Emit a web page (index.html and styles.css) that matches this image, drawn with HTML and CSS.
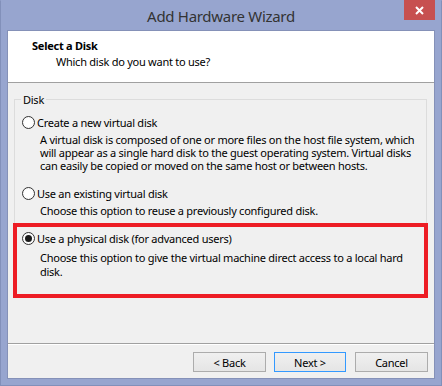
FILE: index.html
```html
<!DOCTYPE html>
<html>
<head>
<meta charset="utf-8">
<link rel="stylesheet" href="styles.css">
</head>
<body>
<div class="window">
  <div class="titlebar">
    <span class="title">Add Hardware Wizard</span>
    <div class="close"><svg width="9" height="9" viewBox="0 0 9 9"><path d="M1 1 L8 8 M8 1 L1 8" stroke="#fff" stroke-width="2" fill="none"/></svg></div>
  </div>
  <div class="client">
    <div class="header">
      <div class="h-title">Select a Disk</div>
      <div class="h-sub">Which disk do you want to use?</div>
    </div>
    <div class="body">
      <div class="group">
        <div class="legend">Disk</div>
        <div class="option o1">
          <div class="row"><span class="radio"></span><span>Create a new virtual disk</span></div>
          <p class="desc">A virtual disk is composed of one or more files on the host file system, which<br>will appear as a single hard disk to the guest operating system. Virtual disks<br>can easily be copied or moved on the same host or between hosts.</p>
        </div>
        <div class="option o2">
          <div class="row"><span class="radio"></span><span>Use an existing virtual disk</span></div>
          <p class="desc">Choose this option to reuse a previously configured disk.</p>
        </div>
        <div class="option o3">
          <div class="row"><span class="radio checked"></span><span>Use a physical disk (for advanced users)</span></div>
          <p class="desc">Choose this option to give the virtual machine direct access to a local hard<br>disk.</p>
          <div class="highlight"></div>
        </div>
      </div>
    </div>
    <div class="footer">
      <button class="btn back">&lt; Back</button>
      <button class="btn next">Next &gt;</button>
      <button class="btn cancel">Cancel</button>
    </div>
  </div>
</div>
</body>
</html>
```
FILE: styles.css
```css
* { box-sizing: border-box; }
html, body { margin: 0; padding: 0; }
body {
  width: 442px;
  height: 386px;
  overflow: hidden;
  font-family: "Noto Sans", "Open Sans", sans-serif;
  font-size: 11px;
  letter-spacing: -0.25px;
  color: #000;
}
.window {
  width: 442px;
  height: 386px;
  background: #97a5cf;
  border: 1px solid #8290ba;
  border-top-color: #97a5cf;
  display: flex;
  flex-direction: column;
  position: relative;
}
.titlebar {
  height: 29px;
  display: flex;
  align-items: center;
  justify-content: center;
}
.title {
  font-size: 15px;
  color: #333;
  letter-spacing: -0.3px;
  line-height: 20px;
  margin-top: 1px;
}
.close {
  position: absolute;
  top: -1px;
  right: 6px;
  width: 31px;
  height: 20px;
  background: #c75050;
  display: flex;
  align-items: center;
  justify-content: center;
}
.client {
  margin: 0 6px 6px;
  flex: 1;
  border: 1px solid #8591b8;
  background: #f0f0f0;
  display: flex;
  flex-direction: column;
}
.header {
  background: #fff;
  height: 52px;
  border-bottom: 1px solid #a0a0a0;
  padding: 7px 0 0 24px;
}
.h-title {
  font-weight: bold;
  line-height: 15px;
}
.h-sub {
  margin: 1px 0 0 24px;
  line-height: 15px;
}
.body {
  flex: 1;
  padding: 16px 7px 0 6px;
}
.group {
  border: 1px solid #dcdcdc;
  padding: 0 0 16px 0;
}
.legend {
  margin: -8px 0 0 6px;
  padding: 0 2px;
  background: #f0f0f0;
  width: max-content;
  line-height: 15px;
}
.option {
  padding-left: 7px;
  position: relative;
}
.o1 { margin-top: 8px; }
.o2, .o3 { margin-top: 14px; }
.row {
  display: flex;
  align-items: center;
  height: 15px;
  gap: 2px;
  white-space: nowrap;
}
.radio {
  width: 13px;
  height: 13px;
  flex: none;
  border-radius: 50%;
  border: 1px solid #333;
  background: radial-gradient(circle, #fff 40%, #f4f4f4 100%);
  position: relative;
}
.radio.checked::after {
  content: "";
  position: absolute;
  left: 2px;
  top: 2px;
  width: 7px;
  height: 7px;
  border-radius: 50%;
  background: #1a1a1a;
}
.desc {
  margin: 3px 0 0 18px;
  line-height: 13px;
  white-space: nowrap;
}
.o3 .desc {
  line-height: 14px;
  margin-top: 5px;
}
.highlight {
  position: absolute;
  top: -8px;
  bottom: -19px;
  left: -2px;
  right: -2px;
  border: 4px solid #ed1c24;
}
.footer {
  border-top: 1px solid #a0a0a0;
  box-shadow: inset 0 1px 0 #fff;
  padding: 8px 6px 6px 0;
  display: flex;
  justify-content: flex-end;
}
.btn {
  height: 20px;
  width: 73px;
  border: 1px solid #acacac;
  background: linear-gradient(#f0f0f0, #e5e5e5);
  font-family: inherit;
  font-size: 11px;
  letter-spacing: -0.25px;
  color: #000;
  padding: 0;
  margin: 0;
}
.back { margin-right: 8px; }
.next { width: 72px; margin-right: 9px; border-color: #3399ff; }
```
